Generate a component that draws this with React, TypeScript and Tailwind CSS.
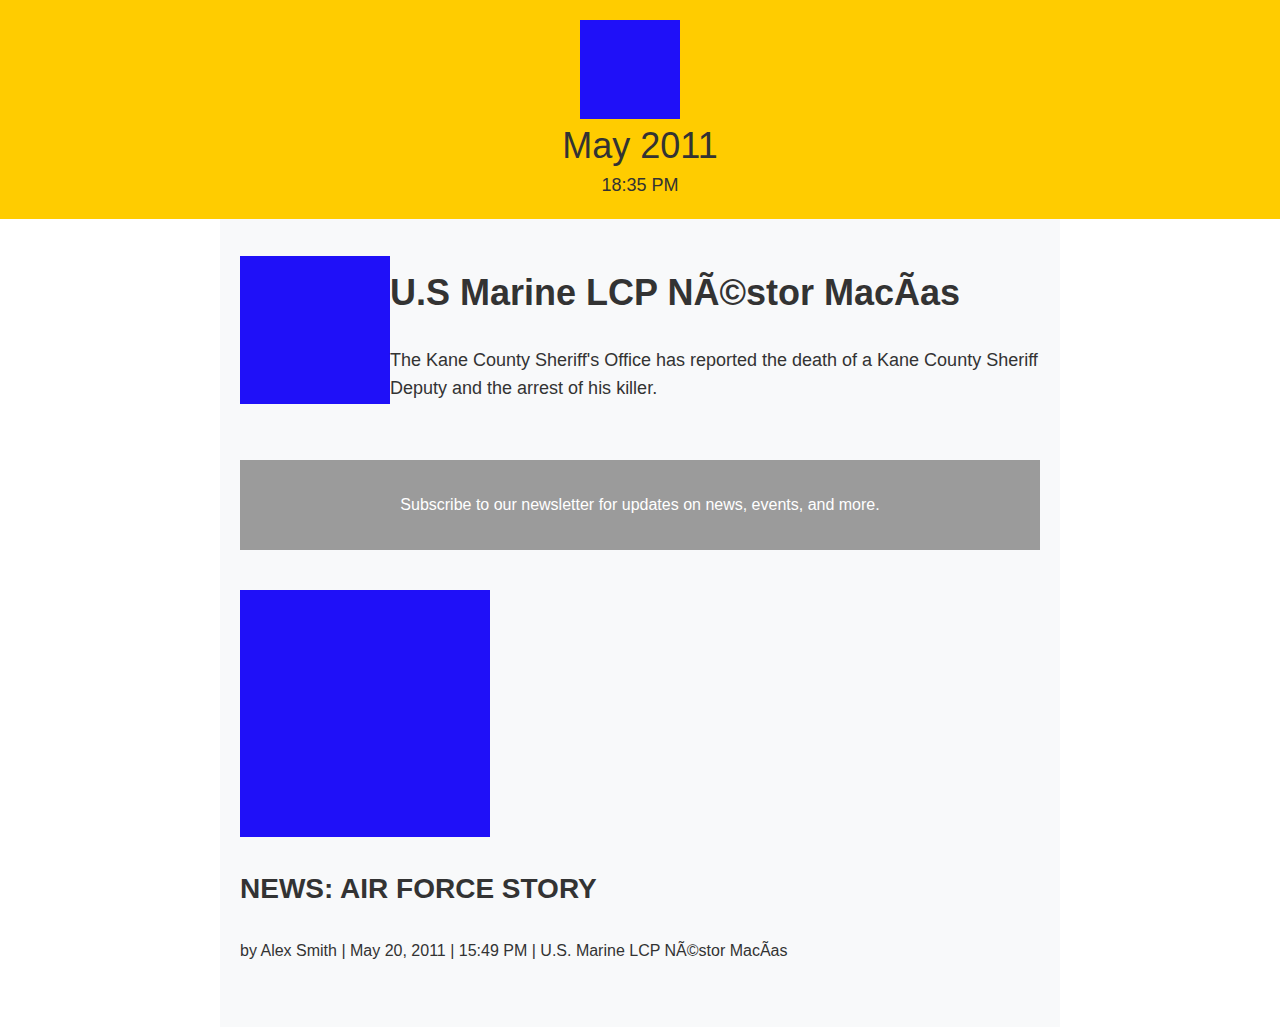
import React from "react";

const Block = ({ className }: { className: string }) => (
    <div className={`bg-[#1f10f8] shrink-0 ${className}`} />
);

export default function App() {
    return (
        <div className="min-h-screen bg-white text-[#333333] font-['Liberation_Sans',Arial,sans-serif]">
            <header className="bg-[#ffcc00] pt-5 pb-[23px] flex flex-col items-center text-center">
                <Block className="w-[100px] h-[99px] mr-5" />
                <div className="mt-[6px] text-[36px] leading-[41px]">May 2011</div>
                <div className="mt-[9px] text-[18px] leading-[21px]">18:35 PM</div>
            </header>

            <main className="w-[840px] mx-auto bg-[#f8f9fa] px-5 pt-[37px] pb-[67px]">
                <article className="flex items-start">
                    <Block className="w-[150px] h-[148px]" />
                    <div>
                        <h1 className="mt-4 text-[36px] leading-[41px] font-bold">U.S Marine LCP NÃ©stor MacÃas</h1>
                        <p className="mt-[33px] text-[18px] leading-[28px]">
                            The Kane County Sheriff's Office has reported the death of a Kane County Sheriff Deputy and the arrest of his killer.
                        </p>
                    </div>
                </article>

                <div className="mt-[56px] h-[90px] bg-[#9b9b9b] flex items-center justify-center text-white text-base">
                    Subscribe to our newsletter for updates on news, events, and more.
                </div>

                <article className="mt-10">
                    <Block className="w-[250px] h-[247px]" />
                    <h2 className="mt-[36px] text-[28px] leading-[32px] font-bold">NEWS: AIR FORCE STORY</h2>
                    <p className="mt-[37px] text-base leading-[18px]">
                        by Alex Smith | May 20, 2011 | 15:49 PM | U.S. Marine LCP NÃ©stor MacÃas
                    </p>
                </article>
            </main>
        </div>
    );
}
